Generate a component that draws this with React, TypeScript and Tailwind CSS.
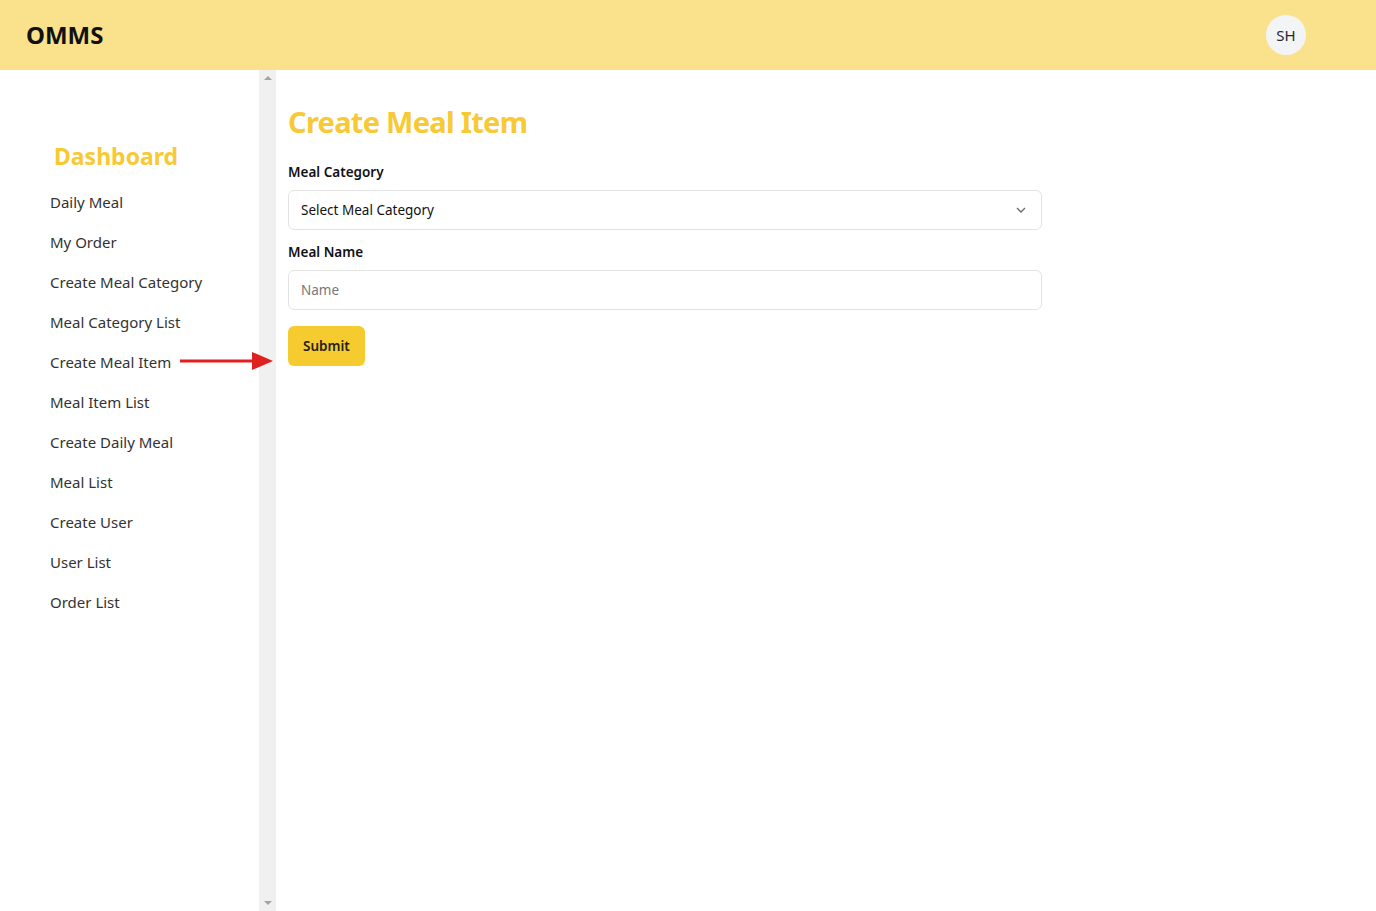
import { useState } from "react";

const navItems = [
  "Daily Meal",
  "My Order",
  "Create Meal Category",
  "Meal Category List",
  "Create Meal Item",
  "Meal Item List",
  "Create Daily Meal",
  "Meal List",
  "Create User",
  "User List",
  "Order List",
];

const App = () => {
  const [name, setName] = useState("");

  return (
    <div className="flex h-[911px] flex-col bg-white font-['Noto_Sans',sans-serif] text-[#222]">
      <header className="flex h-[70px] shrink-0 items-center justify-between bg-[#fae28c] pl-[26px] pr-[70px]">
        <h1 className="text-[24px] font-bold text-[#111]">OMMS</h1>
        <div className="flex h-10 w-10 items-center justify-center rounded-full bg-[#f3f4f6] text-[15px] text-[#1f2937]">
          SH
        </div>
      </header>

      <div className="flex min-h-0 flex-1">
        <aside className="relative z-10 flex w-[259px] shrink-0 flex-col pt-[70px]">
          <h2 className="pl-[54px] text-[23px] font-bold leading-[32px] text-[#f8c932]">
            Dashboard
          </h2>
          <nav className="mt-[10px] flex flex-col">
            {navItems.map((item) => (
              <div key={item} className="relative flex h-10 items-center pl-[50px] text-[15px] text-[#333]">
                <a href="#!">{item}</a>
                {item === "Create Meal Item" && (
                  <svg
                    className="absolute left-[180px] top-[8px]"
                    width="94"
                    height="22"
                    viewBox="0 0 94 22"
                  >
                    <line x1="0" y1="11" x2="76" y2="11" stroke="#e01f1f" strokeWidth="3" />
                    <polygon points="72,2 93,11 72,20" fill="#e01f1f" />
                  </svg>
                )}
              </div>
            ))}
          </nav>
        </aside>

        <div className="flex w-[17px] shrink-0 flex-col items-center justify-between bg-[#f0f0f0] py-[6px]">
          <div className="h-0 w-0 border-x-[4px] border-b-[4px] border-x-transparent border-b-[#a3a3a3]" />
          <div className="h-0 w-0 border-x-[4px] border-t-[4px] border-x-transparent border-t-[#a3a3a3]" />
        </div>

        <main className="flex-1 pl-3 pt-[34px]">
          <div className="w-[754px]">
            <h2 className="text-[29px] font-bold leading-[36px] tracking-tight text-[#f7ca35]">
              Create Meal Item
            </h2>
            <label className="mt-[22px] block text-[13.5px] font-semibold leading-5 text-[#111]">
              Meal Category
            </label>
            <div className="relative mt-2">
              <select className="h-10 w-full appearance-none rounded-md border border-[#e3e3e3] bg-white px-3 text-[13.5px] text-[#111] outline-none">
                <option>Select Meal Category</option>
              </select>
              <svg
                className="pointer-events-none absolute right-[15px] top-[15px]"
                width="12"
                height="10"
                viewBox="0 0 12 10"
                fill="none"
                stroke="#6b6b6b"
                strokeWidth="1.4"
              >
                <path d="M2 3l4 4 4-4" />
              </svg>
            </div>
            <label className="mt-[12px] block text-[13.5px] font-semibold leading-5 text-[#111]">
              Meal Name
            </label>
            <input
              value={name}
              onChange={(e) => setName(e.target.value)}
              placeholder="Name"
              className="mt-2 h-10 w-full rounded-md border border-[#e3e3e3] px-3 text-[13.5px] text-[#111] outline-none placeholder:text-[#777]"
            />
            <button className="mt-4 h-10 rounded-md bg-[#f6cb2f] px-[15px] text-[13.5px] font-semibold text-[#222]">
              Submit
            </button>
          </div>
        </main>
      </div>
    </div>
  );
};

export default App;
